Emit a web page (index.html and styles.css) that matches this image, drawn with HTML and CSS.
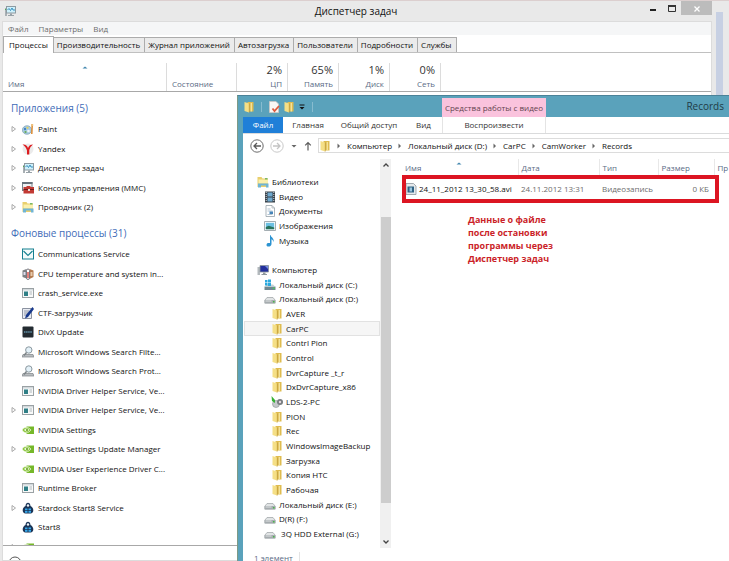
FILE: index.html
```
<!DOCTYPE html>
<html lang="ru">
<head>
    <meta charset="UTF-8">
    <meta name="viewport" content="width=device-width, initial-scale=1.0">
    <title>Диспетчер задач</title>
    <link rel="stylesheet" href="styles.css">
</head>
<body>
    <!-- Icon set -->
    <svg class="sprite" aria-hidden="true">
        <symbol id="i-taskmgr" viewBox="0 0 12 12">
            <path d="M1 3v8h2V3z" fill="#a9b0b4"/><path d="M1 4.500h1.500" stroke="#4fb04f"/>
            <rect x="2.500" y="1.500" width="9" height="6.500" fill="#cdf0fb" stroke="#8d9aa1"/>
            <path d="M3.500 5l1.500-1.500 1.500 2 1.500-2.500 1 2h2" fill="none" stroke="#2a87b8" stroke-width=".9"/>
            <path d="M6 8.500h2v1.500h2v1H4v-1h2z" fill="#98a2a8"/>
        </symbol>
        <symbol id="i-paint" viewBox="0 0 12 12">
            <ellipse cx="5" cy="7" rx="4.700" ry="4.300" fill="#a8cbe0" stroke="#7295aa" stroke-width=".6"/>
            <circle cx="3" cy="6" r="1.200" fill="#3f83c4"/><circle cx="5.500" cy="4.800" r="1.100" fill="#e2d15c"/>
            <circle cx="3.500" cy="9" r="1.100" fill="#69ab54"/><circle cx="6.500" cy="8" r="1.300" fill="#f2f7fa"/>
            <path d="M9.500 1l1.500.5-.5 9.500H9z" fill="#dd8b33"/><path d="M9.200 1h2v2h-2z" fill="#ecc07d"/>
        </symbol>
        <symbol id="i-yandex" viewBox="0 0 12 12">
            <circle cx="6" cy="6" r="5.500" fill="#ebebeb"/>
            <path d="M.5 1.500c3-.5 4.500 1 5.500 3.500C7 2.500 8.500 1.500 11 1.500L8.500 4 7.300 7v4.500H5V7.500C4 4.500 3 3 .5 1.500z" fill="#dc1b1f"/>
        </symbol>
        <symbol id="i-mmc" viewBox="0 0 12 12">
            <rect x=".5" y=".5" width="9.500" height="8" fill="#eef1f3" stroke="#77828a"/><path d="M0 0h10.500v2H0z" fill="#68737c"/>
            <path d="M2 5h2.500V4h4v1H12v6.500H1.500V5z" fill="#c23a34"/><path d="M1.500 7.500H12" stroke="#6d1c1c"/><path d="M6 7h2v2H6z" fill="#eadcd8"/>
        </symbol>
        <symbol id="i-explorer" viewBox="0 0 12 12">
            <path d="M.5 1h4l1 1.500h5.500V11H.5z" fill="#e9cf6d"/><path d="M1.500 3.500h9.500v4H1.500z" fill="#fbf0ad"/>
            <path d="M1 7.500h10.500V11.500H9V9.500H4v2H1z" fill="#70b5d5"/><path d="M8 2h2.500v1.500H8z" fill="#78b867"/>
        </symbol>
        <symbol id="i-mail" viewBox="0 0 12 12">
            <rect x=".5" y="1" width="11" height="10" fill="#f3fbfb" stroke="#168090"/>
            <path d="M1.500 3l4.500 4.500L10.500 3" fill="none" stroke="#168090" stroke-width="1.100"/>
        </symbol>
        <symbol id="i-cpu" viewBox="0 0 12 12">
            <path d="M.5 2.500l4-1.500v9.500l-4-1.500z" fill="#7d8084"/><path d="M1.500 4h2v3h-2z" fill="#dde"/>
            <path d="M7.500 1l4 1.500v6.500l-4 2z" fill="#b37b50"/><path d="M8.500 4h2v4h-2z" fill="#e6c9a9"/>
            <rect x="4.500" y="1" width="3" height="10.500" rx="1.500" fill="#fff" stroke="#5d5e68" stroke-width=".8"/><path d="M6 4v6" stroke="#d22b24" stroke-width="1.200"/>
        </symbol>
        <symbol id="i-exe" viewBox="0 0 12 12">
            <rect x=".5" y="1.500" width="11" height="9" fill="#f8f9f9" stroke="#9aa1a4"/>
            <path d="M1 2h10v1.500H1z" fill="#d3d9dc"/><path d="M2 4.500h4v4.500H2z" fill="#2f7f86"/>
            <path d="M7.500 5H10M7.500 7H10" stroke="#b0b8bc"/>
        </symbol>
        <symbol id="i-ctf" viewBox="0 0 12 12">
            <path d="M.5 1.500h9v10h-9z" fill="#e8ebf2" stroke="#8b92a0"/><path d="M2 4h5M2 6h4M2 8h3" stroke="#7b8496" stroke-width=".8"/>
            <path d="M10.500 0L12 2 6 10 3 11.500 4 8z" fill="#17388c"/>
        </symbol>
        <symbol id="i-divx" viewBox="0 0 12 12">
            <rect x=".5" y=".5" width="11" height="11" rx="1" fill="#232b31"/><path d="M2 6h8" stroke="#52788b" stroke-width="2" stroke-dasharray="1.500 .6"/>
        </symbol>
        <symbol id="i-search" viewBox="0 0 12 12">
            <path d="M1 8.500h10l1 2.500H0z" fill="#b9bdc0" stroke="#7d8387" stroke-width=".7"/>
            <circle cx="6.800" cy="4" r="3.200" fill="#e4f1f8" stroke="#8b989f"/><path d="M4.500 6.500L2 9.500" stroke="#7c8387" stroke-width="1.500"/>
        </symbol>
        <symbol id="i-nvidia" viewBox="0 0 12 12">
            <path d="M4.500 2.500H12v7.500H4.500z" fill="#76b82a"/>
            <path d="M0 6c2-3 5.500-4 9 0-3 4-7 3.500-9 0z" fill="#8cc63f" stroke="#fff" stroke-width=".6"/>
            <path d="M2 6c1.500-1.800 3.500-2 5.500 0-2 2-4 1.700-5.500 0z" fill="#e9f5d9"/><circle cx="5" cy="6" r="1" fill="#5c9a16"/>
        </symbol>
        <symbol id="i-start8" viewBox="0 0 12 12">
            <path d="M3.500 4C3.500-.5 8.500-.5 8.500 4 12.500 6 12 11.500 8.500 11.500h-5C0 11.500-.5 6 3.500 4z" fill="#1b3557"/>
            <circle cx="6" cy="3.500" r="1.200" fill="#eef5fa"/>
            <path d="M3 6.500h2.500v1.800H3zM6.500 6.500H9v1.800H6.500zM3 9h2.500v1.800H3zM6.500 9H9v1.800H6.500z" fill="#35a9ec"/>
        </symbol>
        <symbol id="i-folder" viewBox="0 0 12 12">
            <path d="M4.500 1H10.500v9.500H4.500z" fill="#dfbc50"/>
            <path d="M1.500 1L6 2.500v9L1.500 10z" fill="#f5df86"/><path d="M8.300 2v8.500" stroke="#f6e7a4" stroke-width="1.200"/><path d="M6.300 2.500v9" stroke="#bd9a38" stroke-width=".7"/>
        </symbol>
        <symbol id="i-video" viewBox="0 0 12 12">
            <path d="M1 .5h10v11H1z" fill="#39424a"/><path d="M3.500 1.500h5v4h-5zM3.500 6.500h5v4h-5z" fill="#70a9cf"/>
            <path d="M2.200 1v10M9.800 1v10" stroke="#e6eaec" stroke-width=".9" stroke-dasharray="1 1"/>
        </symbol>
        <symbol id="i-doc" viewBox="0 0 12 12">
            <path d="M2 .5h6l2.500 2.500v8.500H2z" fill="#fff" stroke="#97a2aa" stroke-width=".8"/><path d="M8 .5V3h2.500" fill="none" stroke="#97a2aa" stroke-width=".6"/>
            <path d="M3.500 4h3M3.500 6h5M3.500 9.500h5" stroke="#91aabe" stroke-width=".7"/><path d="M5.500 6.500h3.500V9H5.500z" fill="#4584b8"/>
        </symbol>
        <symbol id="i-image" viewBox="0 0 12 12">
            <path d="M.5 1.500h11v9H.5z" fill="#fff" stroke="#8d999f" stroke-width=".8"/><path d="M1.800 2.800h8.400v6.400H1.800z" fill="#6cc0e2"/><path d="M1.800 7l3-1.200L10.200 7.500v1.700H1.800z" fill="#29735c"/>
        </symbol>
        <symbol id="i-music" viewBox="0 0 12 12">
            <path d="M6.500 0c.5 2.500 4 3 3 7-.5-2-1.500-2.500-2-2.700V9c0 3-5 3.500-5 1s2.500-2 3.500-2V0z" fill="#2c93d1"/>
        </symbol>
        <symbol id="i-computer" viewBox="0 0 12 12">
            <path d="M.5 3h2.500v8H.5z" fill="#b3b9bd"/><path d="M3 1.500h8.500v6.500H3z" fill="#23309c" stroke="#8b969c" stroke-width=".8"/>
            <path d="M8 2h3v3z" fill="#7790e0"/><path d="M6 8.500h2.500V10H10v1H4.500v-1H6z" fill="#8f989d"/>
        </symbol>
        <symbol id="i-drive" viewBox="0 0 12 12">
            <path d="M1 7l2-2.500h6L11 7v3H1z" fill="#e1e4e5" stroke="#9ba1a4" stroke-width=".7"/><path d="M.5 7h11v3.500H.5z" fill="#a6acaf"/><path d="M1.500 8h6" stroke="#dfe2e3"/><path d="M9 8h1.500v1.500H9z" fill="#48b848"/>
        </symbol>
        <symbol id="i-sysdrive" viewBox="0 0 12 12">
            <path d="M.5 7.500h11v3.500H.5z" fill="#6f8891"/><path d="M1 7.500L3 5.500h6l2 2z" fill="#c4d0d4"/><path d="M9 8.500h1.500V10H9z" fill="#4acb59"/>
            <path d="M1 1h2.500v2.500H1zM4 .5h3v3H4zM1 4h2.500v2.500H1zM4 4h3v3H4z" fill="#2ba9de"/>
        </symbol>
        <symbol id="i-lds" viewBox="0 0 12 12">
            <circle cx="5" cy="8" r="3.500" fill="#c5c9cb" stroke="#8b9092" stroke-width=".6"/><circle cx="9" cy="6" r="3" fill="#777d80"/><circle cx="9" cy="6" r="1.200" fill="#e5d8dd"/>
            <path d="M.5 0l3.500 4v3L1 5z" fill="#35b233"/>
        </symbol>
        <symbol id="i-avi" viewBox="0 0 12 12">
            <path d="M1 .5h7.500l2.500 2.500v8.500H1z" fill="#e5e9ec" stroke="#8e979e" stroke-width=".8"/><path d="M2.500 3.500h6.500V9.500H2.500z" fill="#2f6183"/><path d="M4.500 4.500h2.500v4H4.500z" fill="#9bc6df"/>
        </symbol>
        <symbol id="i-props" viewBox="0 0 12 12">
            <path d="M1.500.500h6.500L10.500 3v8.500h-9z" fill="#faf7f5" stroke="#cbc7c4" stroke-width=".8"/><path d="M4.500 7.500l2 2.500L11 5" fill="none" stroke="#dd5b3e" stroke-width="1.800"/>
        </symbol>
        <symbol id="i-expand" viewBox="0 0 6 8">
            <path d="M1 1.500L4.500 4 1 6.500z" fill="none" stroke="#969696" stroke-width=".8"/>
        </symbol>
        <symbol id="i-crumb" viewBox="0 0 6 8">
            <path d="M1.500 1.500L4 4 1.500 6.500z" fill="#666"/>
        </symbol>
        <symbol id="i-sort" viewBox="0 0 6 3">
            <path d="M.5 2.500L3 .5l2.500 2z" fill="#4186ae"/>
        </symbol>
        <symbol id="i-up" viewBox="0 0 8 6">
            <path d="M1.500 4.500L4 2l2.500 2.500" fill="none" stroke="#444" stroke-width="1.300"/>
        </symbol>
        <symbol id="i-down" viewBox="0 0 8 6">
            <path d="M1.500 1.500L4 4l2.500-2.500" fill="none" stroke="#444" stroke-width="1.300"/>
        </symbol>
    </svg>

    <div class="desktop">
        <div class="back-window"></div>

        <!-- Task manager -->
        <section class="window taskmgr">
            <header class="tm-title">
                <svg class="icon"><use href="#i-taskmgr"/></svg>
                <h1>Диспетчер задач</h1>
                <div class="win-buttons">
                    <button type="button" aria-label="Свернуть"><svg viewBox="0 0 14 14"><path d="M4 9h6" stroke="#222" stroke-width="2"/></svg></button>
                    <button type="button" aria-label="Развернуть"><svg viewBox="0 0 14 14"><path d="M3.500 5.500h7v5h-7z" fill="none" stroke="#333"/><path d="M3 5h8" stroke="#333" stroke-width="2"/></svg></button>
                    <button type="button" class="close" aria-label="Закрыть"><svg viewBox="0 0 14 14"><path d="M4.500 5.500l5 5M9.500 5.500l-5 5" stroke="#fff" stroke-width="1.300"/></svg></button>
                </div>
            </header>
            <div class="tm-body">
                <nav class="tm-menu">
                    <button type="button">Файл</button>
                    <button type="button">Параметры</button>
                    <button type="button">Вид</button>
                </nav>
                <div class="tm-tabs" role="tablist">
                    <button type="button" role="tab" class="active">Процессы</button>
                    <button type="button" role="tab">Производительность</button>
                    <button type="button" role="tab">Журнал приложений</button>
                    <button type="button" role="tab">Автозагрузка</button>
                    <button type="button" role="tab">Пользователи</button>
                    <button type="button" role="tab">Подробности</button>
                    <button type="button" role="tab">Службы</button>
                </div>
                <div class="tm-head">
                    <div class="col name"><svg class="sort"><use href="#i-sort"/></svg><span>Имя</span></div>
                    <div class="col state"><span>Состояние</span></div>
                    <div class="col num"><b>2%</b><span>ЦП</span></div>
                    <div class="col num"><b>65%</b><span>Память</span></div>
                    <div class="col num"><b>1%</b><span>Диск</span></div>
                    <div class="col num"><b>0%</b><span>Сеть</span></div>
                </div>
                <div class="tm-list">
                    <h2>Приложения (5)</h2>
                    <ul>
                        <li><svg class="arrow"><use href="#i-expand"/></svg><svg class="icon"><use href="#i-paint"/></svg>Paint</li>
                        <li><svg class="arrow"><use href="#i-expand"/></svg><svg class="icon"><use href="#i-yandex"/></svg>Yandex</li>
                        <li><svg class="arrow"><use href="#i-expand"/></svg><svg class="icon"><use href="#i-taskmgr"/></svg>Диспетчер задач</li>
                        <li><svg class="arrow"><use href="#i-expand"/></svg><svg class="icon"><use href="#i-mmc"/></svg>Консоль управления (MMC)</li>
                        <li><svg class="arrow"><use href="#i-expand"/></svg><svg class="icon"><use href="#i-explorer"/></svg>Проводник (2)</li>
                    </ul>
                    <h2>Фоновые процессы (31)</h2>
                    <ul>
                        <li><svg class="icon"><use href="#i-mail"/></svg>Communications Service</li>
                        <li><svg class="icon"><use href="#i-cpu"/></svg>CPU temperature and system in...</li>
                        <li><svg class="icon"><use href="#i-exe"/></svg>crash_service.exe</li>
                        <li><svg class="icon"><use href="#i-ctf"/></svg>CTF-загрузчик</li>
                        <li><svg class="icon"><use href="#i-divx"/></svg>DivX Update</li>
                        <li><svg class="icon"><use href="#i-search"/></svg>Microsoft Windows Search Filte...</li>
                        <li><svg class="icon"><use href="#i-search"/></svg>Microsoft Windows Search Prot...</li>
                        <li><svg class="icon"><use href="#i-exe"/></svg>NVIDIA Driver Helper Service, Ve...</li>
                        <li><svg class="arrow"><use href="#i-expand"/></svg><svg class="icon"><use href="#i-exe"/></svg>NVIDIA Driver Helper Service, Ve...</li>
                        <li><svg class="icon"><use href="#i-nvidia"/></svg>NVIDIA Settings</li>
                        <li><svg class="arrow"><use href="#i-expand"/></svg><svg class="icon"><use href="#i-nvidia"/></svg>NVIDIA Settings Update Manager</li>
                        <li><svg class="icon"><use href="#i-nvidia"/></svg>NVIDIA User Experience Driver C...</li>
                        <li><svg class="icon"><use href="#i-exe"/></svg>Runtime Broker</li>
                        <li><svg class="arrow"><use href="#i-expand"/></svg><svg class="icon"><use href="#i-start8"/></svg>Stardock Start8 Service</li>
                        <li><svg class="icon"><use href="#i-start8"/></svg>Start8</li>
                        <li><svg class="arrow"><use href="#i-expand"/></svg><svg class="icon"><use href="#i-nvidia"/></svg>Stereo Vision Control Panel API ...</li>
                    </ul>
                </div>
                <footer class="tm-foot">
                    <button type="button"><svg viewBox="0 0 14 14"><circle cx="7" cy="7" r="6" fill="none" stroke="#555"/><path d="M4.500 8.500L7 6l2.500 2.500" fill="none" stroke="#555"/></svg>Меньше</button>
                </footer>
            </div>
        </section>

        <!-- Explorer -->
        <section class="window explorer">
            <header class="ex-title">
                <div class="quick">
                    <svg class="icon"><use href="#i-folder"/></svg>
                    <i class="sep"></i>
                    <svg class="icon"><use href="#i-props"/></svg>
                    <svg class="icon"><use href="#i-folder"/></svg>
                    <svg class="more" viewBox="0 0 8 8"><path d="M1.500 2h5" stroke="#111"/><path d="M1.500 4h5L4 6.500z" fill="#111"/></svg>
                    <i class="sep"></i>
                </div>
                <div class="context">Средства работы с видео</div>
                <h1>Records</h1>
            </header>
            <div class="ex-body">
                <nav class="ribbon">
                    <button type="button" class="file">Файл</button>
                    <button type="button" class="home">Главная</button>
                    <button type="button" class="share">Общий доступ</button>
                    <button type="button" class="view">Вид</button>
                    <button type="button" class="play">Воспроизвести</button>
                </nav>
                <div class="address">
                    <button type="button" aria-label="Назад"><svg class="nav-round" viewBox="0 0 14 14"><circle cx="7" cy="7" r="6.200" fill="none" stroke="#6b6b6b"/><path d="M11 7H4M7 4L4 7l3 3" fill="none" stroke="#5a5a5a" stroke-width="1.300"/></svg></button>
                    <button type="button" aria-label="Вперёд"><svg class="nav-round" viewBox="0 0 14 14"><circle cx="7" cy="7" r="6.200" fill="none" stroke="#c9c9c9"/><path d="M3 7h7M7 4l3 3-3 3" fill="none" stroke="#c4c4c4" stroke-width="1.300"/></svg></button>
                    <button type="button" aria-label="Последние расположения"><svg class="nav-small" viewBox="0 0 8 12"><path d="M1.500 5h5L4 7.500z" fill="#666"/></svg></button>
                    <button type="button" aria-label="Вверх"><svg class="nav-small" viewBox="0 0 8 12"><path d="M4 10.500V2.500M1.200 5.300L4 2.500l2.800 2.800" fill="none" stroke="#5c5c5c" stroke-width="1.200"/></svg></button>
                    <div class="crumbs">
                        <svg class="icon"><use href="#i-folder"/></svg>
                        <svg class="crumb"><use href="#i-crumb"/></svg><a href="#">Компьютер</a>
                        <svg class="crumb"><use href="#i-crumb"/></svg><a href="#">Локальный диск (D:)</a>
                        <svg class="crumb"><use href="#i-crumb"/></svg><a href="#">CarPC</a>
                        <svg class="crumb"><use href="#i-crumb"/></svg><a href="#">CamWorker</a>
                        <svg class="crumb"><use href="#i-crumb"/></svg><a href="#">Records</a>
                    </div>
                </div>
                <div class="ex-main">
                    <aside class="tree">
                        <ul class="libs">
                            <li><svg class="icon"><use href="#i-explorer"/></svg>Библиотеки</li>
                            <li class="l2"><svg class="icon"><use href="#i-video"/></svg>Видео</li>
                            <li class="l2"><svg class="icon"><use href="#i-doc"/></svg>Документы</li>
                            <li class="l2"><svg class="icon"><use href="#i-image"/></svg>Изображения</li>
                            <li class="l2"><svg class="icon"><use href="#i-music"/></svg>Музыка</li>
                        </ul>
                        <ul>
                            <li><svg class="icon"><use href="#i-computer"/></svg>Компьютер</li>
                            <li class="l2"><svg class="icon"><use href="#i-sysdrive"/></svg>Локальный диск (C:)</li>
                            <li class="l2"><svg class="icon"><use href="#i-drive"/></svg>Локальный диск (D:)</li>
                            <li class="l3"><svg class="icon"><use href="#i-folder"/></svg>AVER</li>
                            <li class="l3 selected"><svg class="icon"><use href="#i-folder"/></svg>CarPC</li>
                            <li class="l3"><svg class="icon"><use href="#i-folder"/></svg>Contrl Pion</li>
                            <li class="l3"><svg class="icon"><use href="#i-folder"/></svg>Control</li>
                            <li class="l3"><svg class="icon"><use href="#i-folder"/></svg>DvrCapture _t_r</li>
                            <li class="l3"><svg class="icon"><use href="#i-folder"/></svg>DxDvrCapture_x86</li>
                            <li class="l3"><svg class="icon"><use href="#i-lds"/></svg>LDS-2-PC</li>
                            <li class="l3"><svg class="icon"><use href="#i-folder"/></svg>PION</li>
                            <li class="l3"><svg class="icon"><use href="#i-folder"/></svg>Rec</li>
                            <li class="l3"><svg class="icon"><use href="#i-folder"/></svg>WindowsImageBackup</li>
                            <li class="l3"><svg class="icon"><use href="#i-folder"/></svg>Загрузка</li>
                            <li class="l3"><svg class="icon"><use href="#i-folder"/></svg>Копия HTC</li>
                            <li class="l3"><svg class="icon"><use href="#i-folder"/></svg>Рабочая</li>
                            <li class="l2"><svg class="icon"><use href="#i-drive"/></svg>Локальный диск (E:)</li>
                            <li class="l2"><svg class="icon"><use href="#i-drive"/></svg>D(R) (F:)</li>
                            <li class="l2"><svg class="icon"><use href="#i-drive"/></svg>&nbsp;3Q HDD External (G:)</li>
                        </ul>
                    </aside>
                    <div class="scrollbar">
                        <svg><use href="#i-up"/></svg>
                        <div class="thumb"></div>
                        <svg><use href="#i-down"/></svg>
                    </div>
                    <div class="files">
                        <table>
                            <thead>
                                <tr>
                                    <th class="c-name">Имя<svg class="sort"><use href="#i-sort"/></svg></th>
                                    <th class="c-date">Дата</th>
                                    <th class="c-type">Тип</th>
                                    <th class="c-size">Размер</th>
                                    <th>Пр</th>
                                </tr>
                            </thead>
                            <tbody>
                                <tr>
                                    <td class="fname"><svg class="icon"><use href="#i-avi"/></svg>24_11_2012 13_30_58.avi</td>
                                    <td>24.11.2012 13:31</td>
                                    <td>Видеозапись</td>
                                    <td class="size">0 КБ</td>
                                    <td></td>
                                </tr>
                            </tbody>
                        </table>
                        <div class="marker"></div>
                        <p class="note">Данные о файле<br>после остановки<br>программы через<br>Диспетчер задач</p>
                    </div>
                </div>
                <footer class="ex-foot"><span>1 элемент</span></footer>
            </div>
        </section>
    </div>
</body>
</html>
```
FILE: styles.css
```
* {
    margin: 0;
    padding: 0;
    box-sizing: border-box;
}

body {
    font-family: "Open Sans", "Noto Sans", sans-serif;
    font-size: 8px;
    line-height: 12px;
    color: #111;
    overflow: hidden;
}

button {
    font: inherit;
    color: inherit;
    background: none;
    border: none;
}

a {
    color: inherit;
    text-decoration: none;
}

ul {
    list-style: none;
}

h1, h2, th {
    font-weight: normal;
}

svg {
    display: block;
    flex: none;
}

.sprite {
    position: absolute;
    width: 0;
    height: 0;
}

.icon {
    width: 12px;
    height: 12px;
}

.sort {
    width: 6px;
    height: 3px;
}

/* Desktop with overlapping windows */
.desktop {
    position: relative;
    height: 100vh;
    overflow: hidden;
    background: #e9e9e9;
    border-top: 1px solid #dccfcf;
}

.back-window {
    position: absolute;
    top: 11px;
    right: 6px;
    bottom: 0;
    width: 8px;
    background: #c7d0e3;
}

.window {
    position: absolute;
    display: flex;
    flex-direction: column;
    overflow: hidden;
}

/* Task manager */
.taskmgr {
    top: 0;
    left: 0;
    right: 13px;
    bottom: 0;
    padding: 0 4px 0 2px;
    background: #e9e9e9;
}

.tm-title {
    display: flex;
    align-items: center;
    height: 20px;
    padding-left: 2px;
}

.tm-title h1 {
    flex: 1;
    padding-left: 53px;
    font-size: 10px;
    text-align: center;
}

.win-buttons {
    display: flex;
    align-self: flex-start;
}

.win-buttons button {
    width: 19px;
    height: 14px;
}

.win-buttons svg {
    width: 14px;
    height: 14px;
    margin: 0 auto;
}

.win-buttons .close {
    width: 31px;
    background: #bcbcbc;
}

.tm-body {
    flex: 1;
    display: flex;
    flex-direction: column;
    min-height: 0;
    border: 1px solid #dcdcdc;
    background: #fff;
}

.tm-menu {
    display: flex;
    gap: 10px;
    padding: 0 5px;
    line-height: 13px;
    background: #f5f6f7;
    color: #6e6e6e;
}

.tm-tabs {
    display: flex;
    align-items: flex-end;
    height: 18px;
    border-bottom: 1px solid #c0c0c0;
}

.tm-tabs button {
    height: 15px;
    padding: 0 4px 0 3px;
    border: 1px solid #acacac;
    border-left: none;
    border-bottom: none;
    background: #ebebeb;
}

.tm-tabs .active {
    height: 17px;
    padding: 0 5px;
    margin-bottom: -1px;
    border-left: 1px solid #acacac;
    background: #fff;
}

.tm-head {
    display: flex;
    height: 39px;
    padding-top: 10px;
    border-bottom: 1px solid #a8a8a8;
    color: #5a6b85;
}

.tm-head .col {
    display: flex;
    flex-direction: column;
    justify-content: flex-end;
    padding: 0 5px 1px;
    border-right: 1px solid #dcdcdc;
}

.tm-head .name {
    width: 164px;
    justify-content: space-between;
}

.tm-head .sort {
    margin: 3px auto 0;
}

.tm-head .state {
    width: 70px;
}

.tm-head .num {
    width: 51px;
    text-align: right;
}

.tm-head b {
    font-size: 11px;
    line-height: 16px;
    font-weight: normal;
    color: #333;
}

.tm-list {
    flex: 1;
    min-height: 0;
    overflow: hidden;
    padding: 6px 8px 0;
}

.tm-list h2 {
    font-size: 10px;
    line-height: 21px;
    color: #3f6cb8;
}

.tm-list ul {
    margin-bottom: 6px;
}

.tm-list li {
    display: flex;
    align-items: center;
    gap: 4px;
    height: 20px;
    padding-left: 11px;
}

.tm-list li:nth-child(even) {
    height: 19px;
}

.tm-list .arrow {
    width: 6px;
    height: 8px;
    margin: 0 1px 0 -11px;
}

.tm-foot {
    height: 15px;
    overflow: hidden;
    padding: 10px 5px 0;
    border-top: 1px solid #a8a8a8;
}

.tm-foot button {
    display: flex;
    align-items: center;
    gap: 5px;
}

.tm-foot svg {
    width: 14px;
    height: 14px;
}

/* Explorer */
.explorer {
    top: 94px;
    left: 237px;
    right: -40px;
    bottom: 0;
    padding-left: 5px;
    border-top: 1px solid #4b8298;
    border-left: 1px solid #7d9a86;
    background: #5aa2bb;
}

.ex-title {
    display: flex;
    height: 21px;
}

.quick {
    display: flex;
    align-items: center;
    gap: 3px;
    width: 199px;
}

.quick .sep {
    width: 1px;
    height: 10px;
    margin: 0 3px;
    background: #87bccf;
}

.quick .more {
    width: 8px;
    height: 8px;
}

.context {
    width: 104px;
    margin-top: 2px;
    line-height: 19px;
    text-align: center;
    background: #fac3dd;
    color: #64444f;
}

.ex-title h1 {
    flex: 1;
    padding-right: 45px;
    text-align: right;
    font-size: 10px;
    line-height: 21px;
    color: #1f3c47;
}

.ex-body {
    flex: 1;
    display: flex;
    flex-direction: column;
    min-height: 0;
    background: #fff;
}

.ribbon {
    display: flex;
    height: 17px;
    border-bottom: 1px solid #dadbdc;
    color: #333;
}

.ribbon .file {
    width: 40px;
    background: #1f7fd8;
    color: #fff;
}

.ribbon .home {
    width: 50px;
}

.ribbon .share {
    width: 72px;
}

.ribbon .view {
    width: 37px;
}

.ribbon .play {
    width: 104px;
    border-left: 1px solid #e4e4e4;
    border-right: 1px solid #e4e4e4;
}

.address {
    display: flex;
    align-items: center;
    gap: 6px;
    padding: 4px 0 6px 7px;
}

.nav-round {
    width: 14px;
    height: 14px;
}

.nav-small {
    width: 8px;
    height: 12px;
}

.crumbs {
    flex: 1;
    display: flex;
    align-items: center;
    gap: 5px;
    height: 15px;
    border: 1px solid #dcdcdc;
}

.crumbs .crumb {
    width: 6px;
    height: 8px;
}

.ex-main {
    flex: 1;
    display: flex;
    min-height: 0;
}

.tree {
    width: 137px;
    padding: 15px 0 0 1px;
    overflow: hidden;
}

.tree .libs {
    margin-bottom: 14px;
}

.tree li {
    display: flex;
    align-items: center;
    gap: 3px;
    height: 15px;
    padding-left: 13px;
    white-space: nowrap;
}

.tree li:nth-child(3n) {
    height: 14px;
}

.tree .l2 {
    padding-left: 20px;
}

.tree .l3 {
    padding-left: 27px;
}

.tree .selected {
    background: #f6f6f6;
    outline: 1px solid #e2e2e2;
    outline-offset: -1px;
}

.scrollbar {
    display: flex;
    flex-direction: column;
    align-items: center;
    width: 11px;
    background: #f0f0f0;
}

.scrollbar svg {
    width: 8px;
    height: 6px;
    margin: 3px 0;
}

.scrollbar .thumb {
    width: 10px;
    height: 286px;
    margin: 46px 0 auto;
    background: #cdcdcd;
}

.files {
    position: relative;
    flex: 1;
    padding-left: 11px;
}

.files table {
    width: 100%;
    border-collapse: collapse;
    table-layout: fixed;
}

.files th {
    height: 18px;
    padding-left: 3px;
    text-align: left;
    color: #5a6b85;
    border-left: 1px solid #e8e8e8;
}

.files .c-name {
    width: 116px;
    border-left: none;
}

.files .c-name .sort {
    float: right;
    margin-right: 56px;
}

.files .c-date {
    width: 81px;
}

.files .c-type {
    width: 59px;
}

.files .c-size {
    width: 56px;
}

.files td {
    height: 24px;
    padding-left: 3px;
    color: #6d6d6d;
    white-space: nowrap;
}

.files .fname {
    display: flex;
    align-items: center;
    gap: 2px;
    color: #111;
}

.files .size {
    padding-right: 5px;
    text-align: right;
}

/* Red highlight around the file row */
.marker {
    position: absolute;
    top: 16px;
    left: 11px;
    width: 317px;
    height: 28px;
    border: 4px solid #dc1522;
}

.note {
    padding: 12px 66px;
    font-size: 9px;
    line-height: 13px;
    font-weight: bold;
    color: #cb1f29;
}

.ex-foot {
    padding: 4px 11px 0;
    line-height: 12px;
    height: 13px;
    overflow: hidden;
    color: #5a6b85;
}

.ex-foot span {
    padding-right: 6px;
    border-right: 1px solid #e4e4e4;
}
```
